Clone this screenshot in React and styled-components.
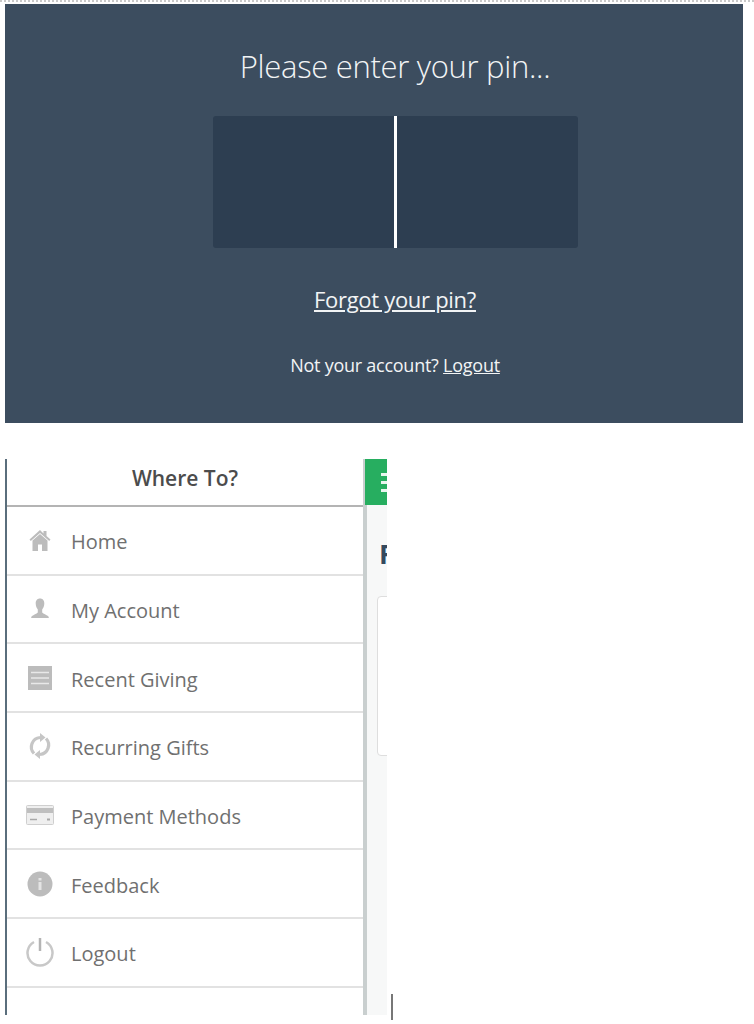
import styled, { createGlobalStyle } from 'styled-components';

const GlobalStyle = createGlobalStyle`
  html, body {
    background: #fff;
    margin: 0;
  }
  body {
    font-family: 'Open Sans', 'Liberation Sans', sans-serif;
    height: 1024px;
    overflow: hidden;
  }
`;

const HomeIcon = () => (
  <svg width="24" height="24" viewBox="0 0 24 24" fill="#bcbcbc">
    <path d="M12 2 1.500 11.500l1.300 1.400L12 5l9.200 7.900 1.300-1.400L18.500 8V3h-3v2.400z" />
    <path d="M12 6 4.500 12.500V23H10v-6.500h4V23h5.500V12.500z" />
  </svg>
);

const UserIcon = () => (
  <svg width="24" height="24" viewBox="0 0 24 24" fill="#bcbcbc">
    <path d="M12 1.500c-3 0-4.300 2.300-4.300 5 0 2.400 1 4.800 2.100 5.900v3.100c-1.200 1.500-4.300 2.300-5.800 3.500-.7.6-.8 1.500-.8 2h17.600c0-.5-.1-1.400-.8-2-1.500-1.200-4.600-2-5.800-3.500v-3.100c1.100-1.100 2.100-3.500 2.100-5.900 0-2.700-1.300-5-4.300-5z" />
  </svg>
);

const ListIcon = () => (
  <svg width="24" height="24" viewBox="0 0 24 24">
    <rect width="24" height="24" fill="#bcbcbc" />
    <path d="M3 6.500h18M3 12h18M3 17.500h18" stroke="#e8e8e8" strokeWidth="1.500" />
  </svg>
);

const RefreshIcon = () => (
  <svg width="24" height="28" viewBox="0 0 24 28" fill="none">
    <path d="M6 21.500a9.500 9.500 0 0 1 6-16" stroke="#c6c6c6" strokeWidth="3.200" />
    <path d="M18 6.500a9.500 9.500 0 0 1-6 16" stroke="#c6c6c6" strokeWidth="3.200" />
    <path d="M12 1v9l5.500-4.500zM12 27v-9l-5.500 4.500z" fill="#c6c6c6" />
  </svg>
);

const CardIcon = () => (
  <svg width="28" height="20" viewBox="0 0 28 20">
    <rect x=".5" y=".5" width="27" height="19" rx="1" fill="#efefef" stroke="#cfcfcf" />
    <rect x="1" y="3" width="26" height="5" fill="#bfbfbf" />
    <path d="M4 14.500h7" stroke="#a8a8a8" strokeWidth="1.500" />
    <path d="M21 14.500h3" stroke="#a8a8a8" strokeWidth="2" />
  </svg>
);

const InfoIcon = () => (
  <svg width="26" height="26" viewBox="0 0 26 26">
    <circle cx="13" cy="13" r="12.500" fill="#bcbcbc" />
    <rect x="11.500" y="11" width="3" height="8" fill="#e4e4e4" />
    <rect x="11.500" y="7" width="3" height="2.500" fill="#e4e4e4" />
  </svg>
);

const PowerIcon = () => (
  <svg width="28" height="29" viewBox="0 0 28 29" fill="none" stroke="#c8c8c8" strokeWidth="2.500">
    <path d="M8 4A12.500 12.500 0 1 0 20 4" />
    <path d="M14 0v13" stroke="#b4b4b4" />
  </svg>
);

const menuItems = [
  { label: 'Home', icon: <HomeIcon /> },
  { label: 'My Account', icon: <UserIcon /> },
  { label: 'Recent Giving', icon: <ListIcon /> },
  { label: 'Recurring Gifts', icon: <RefreshIcon /> },
  { label: 'Payment Methods', icon: <CardIcon /> },
  { label: 'Feedback', icon: <InfoIcon /> },
  { label: 'Logout', icon: <PowerIcon /> },
];

function App() {
  return (
    <Page>
      <GlobalStyle />
      <DottedEdge />
      <PinPanel>
        <PinTitle>Please enter your pin...</PinTitle>
        <PinBox>
          <PinCursor />
        </PinBox>
        <ForgotLink href="#">Forgot your pin?</ForgotLink>
        <NotYours>
          Not your account? <LogoutLink href="#">Logout</LogoutLink>
        </NotYours>
      </PinPanel>
      <PhoneRow>
        <Drawer>
          <DrawerHeader>Where To?</DrawerHeader>
          {menuItems.map((item) => (
            <MenuRow key={item.label}>
              <IconSlot>{item.icon}</IconSlot>
              <MenuLabel>{item.label}</MenuLabel>
            </MenuRow>
          ))}
        </Drawer>
        <Peek>
          <TopBar>
            <Burger>
              <span />
              <span />
              <span />
            </Burger>
          </TopBar>
          <PeekBody>
            <PeekHeading>F</PeekHeading>
            <PeekCard />
          </PeekBody>
        </Peek>
        <StrayMark />
      </PhoneRow>
    </Page>
  );
}

export default App;

const Page = styled.div`
  display: flex;
  flex-direction: column;
  width: 754px;
`;
const DottedEdge = styled.div`
  border-top: 2px dotted #c9c9c9;
  height: 2px;
`;
const PinPanel = styled.div`
  align-items: center;
  background-color: #3c4d5f;
  box-sizing: border-box;
  color: #f2f4f5;
  display: flex;
  flex-direction: column;
  height: 419px;
  margin-left: 5px;
  padding-left: 42px;
  width: 738px;
`;
const PinTitle = styled.h1`
  font-family: 'Open Sans', sans-serif;
  font-size: 31px;
  font-weight: 300;
  letter-spacing: -0.3px;
  line-height: 40px;
  margin: 42px 0 30px;
`;
const PinBox = styled.div`
  background-color: #2d3e51;
  border-radius: 3px;
  display: flex;
  height: 132px;
  justify-content: center;
  width: 365px;
`;
const PinCursor = styled.div`
  background-color: #fff;
  height: 100%;
  width: 3px;
`;
const ForgotLink = styled.a`
  color: #f2f4f5;
  font-size: 22px;
  letter-spacing: -0.3px;
  line-height: 28px;
  margin-top: 37px;
`;
const NotYours = styled.p`
  font-size: 18px;
  letter-spacing: -0.25px;
  line-height: 26px;
  margin: 39px 0 0;
`;
const LogoutLink = styled.a`
  color: #f2f4f5;
`;
const PhoneRow = styled.div`
  align-items: flex-start;
  display: flex;
  margin: 36px 0 0 5px;
`;
const Drawer = styled.nav`
  border-left: 2px solid #5a6e7c;
  border-right: 2px solid #c9cfcf;
  box-sizing: border-box;
  height: 556px;
  width: 360px;
`;
const DrawerHeader = styled.div`
  border-bottom: 2px solid #b4b4b4;
  box-sizing: border-box;
  color: #4c4c4c;
  font-size: 21px;
  font-weight: 600;
  height: 48px;
  line-height: 38px;
  text-align: center;
`;
const MenuRow = styled.div`
  align-items: center;
  border-bottom: 2px solid #e2e2e2;
  box-sizing: border-box;
  display: flex;
  height: 68.7px;
  padding-left: 18px;
`;
const IconSlot = styled.span`
  align-items: center;
  display: flex;
  justify-content: center;
  width: 30px;
`;
const MenuLabel = styled.span`
  color: #707070;
  font-size: 20px;
  margin-left: 16px;
  padding-top: 3px;
`;
const Peek = styled.div`
  display: flex;
  flex-direction: column;
  height: 556px;
  overflow: hidden;
  width: 22px;
`;
const TopBar = styled.div`
  align-items: center;
  background-color: #27ae60;
  display: flex;
  flex: none;
  height: 46px;
  padding-left: 16px;
`;
const Burger = styled.div`
  display: flex;
  flex: none;
  flex-direction: column;
  gap: 5px;

  span {
    background-color: #e8f6ee;
    display: block;
    height: 3px;
    width: 20px;
  }
`;
const PeekBody = styled.div`
  background-color: #f7f8f8;
  border-left: 2px solid #c9cfcf;
  flex: 1;
  padding: 31px 0 0 12px;
`;
const PeekHeading = styled.div`
  color: #34495e;
  font-size: 27px;
  font-weight: 700;
  line-height: 36px;
  white-space: nowrap;
`;
const PeekCard = styled.div`
  background-color: #fff;
  border: 1px solid #dedede;
  border-radius: 4px;
  box-sizing: border-box;
  height: 160px;
  margin: 24px 0 0 -2px;
  width: 300px;
`;
const StrayMark = styled.div`
  align-self: flex-end;
  background-color: #777;
  flex: none;
  height: 26px;
  margin: 0 0 -5px 4px;
  width: 2px;
`;
